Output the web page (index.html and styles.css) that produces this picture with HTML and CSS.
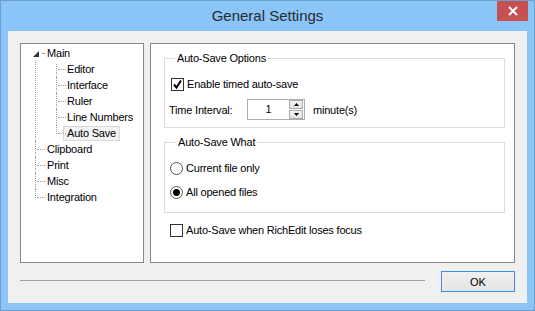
FILE: index.html
```html
<!DOCTYPE html>
<html lang="en">
<head>
<meta charset="UTF-8">
<meta name="viewport" content="width=device-width, initial-scale=1.0">
<title>General Settings</title>
<link rel="stylesheet" href="styles.css">
</head>
<body>
<div class="window">
  <div class="titlebar">
    <div class="title">General Settings</div>
    <button class="close" type="button">
      <svg width="10" height="10" viewBox="0 0 10 10"><path d="M1 1 L9 9 M9 1 L1 9" stroke="#fff" stroke-width="2"/></svg>
    </button>
  </div>

  <div class="client">
    <div class="main">
      <div class="tree-box">
        <ul class="tree">
          <li class="open">
            <div class="row">
              <span class="expander"><svg width="6" height="6" viewBox="0 0 6 6"><polygon points="6,0 6,6 0,6" fill="#333"/></svg></span>
              <span class="label">Main</span>
            </div>
            <ul>
              <li><div class="row"><span class="label">Editor</span></div></li>
              <li><div class="row"><span class="label">Interface</span></div></li>
              <li><div class="row"><span class="label">Ruler</span></div></li>
              <li><div class="row"><span class="label">Line Numbers</span></div></li>
              <li><div class="row"><span class="label selected">Auto Save</span></div></li>
            </ul>
          </li>
          <li><div class="row"><span class="label">Clipboard</span></div></li>
          <li><div class="row"><span class="label">Print</span></div></li>
          <li><div class="row"><span class="label">Misc</span></div></li>
          <li><div class="row"><span class="label">Integration</span></div></li>
        </ul>
      </div>

      <div class="page">
        <fieldset class="group group-options">
          <legend>Auto-Save Options</legend>
          <label class="option">
            <span class="checkbox"><svg width="11" height="11" viewBox="0 0 11 11"><path d="M2 5.5 L4.5 8.5 L9 1.5" fill="none" stroke="#000" stroke-width="2"/></svg></span>
            Enable timed auto-save
          </label>
          <div class="interval">
            <span class="interval-label">Time Interval:</span>
            <div class="spin">
              <span class="spin-value">1</span>
              <div class="spin-buttons">
                <span class="spin-btn"><svg width="5" height="3" viewBox="0 0 5 3"><polygon points="2.5,0 5,3 0,3" fill="#000"/></svg></span>
                <span class="spin-btn"><svg width="5" height="3" viewBox="0 0 5 3"><polygon points="0,0 5,0 2.5,3" fill="#000"/></svg></span>
              </div>
            </div>
            <span class="unit">minute(s)</span>
          </div>
        </fieldset>

        <fieldset class="group group-what">
          <legend>Auto-Save What</legend>
          <label class="option"><span class="radio"></span>Current file only</label>
          <label class="option"><span class="radio on"></span>All opened files</label>
        </fieldset>

        <label class="option focus-opt"><span class="checkbox"></span>Auto-Save when RichEdit loses focus</label>
      </div>
    </div>

    <div class="footer">
      <div class="separator"></div>
      <button class="ok" type="button">OK</button>
    </div>
  </div>
</div>
</body>
</html>
```

FILE: styles.css
```css
* {
  box-sizing: border-box;
}
body {
  margin: 0;
  padding: 0;
  background-color: #8bc4f6;
  font-family: 'Segoe UI', 'Liberation Sans', Arial, sans-serif;
  font-size: 11px;
  letter-spacing: -0.2px;
  color: #000;
}
.window {
  width: 535px;
  height: 311px;
  border: 1px solid #6b9fd0;
  background-color: #8bc4f6;
  display: flex;
  flex-direction: column;
}
.titlebar {
  height: 30px;
  display: grid;
  grid-template-columns: 1fr auto 1fr;
}
.title {
  grid-column: 2;
  font-size: 15px;
  letter-spacing: 0;
  line-height: 30px;
  color: #262b33;
}
.close {
  grid-column: 3;
  justify-self: end;
  align-self: start;
  width: 31px;
  height: 20px;
  margin-right: 6px;
  padding: 0;
  border: none;
  background-color: #c75050;
  display: flex;
  align-items: center;
  justify-content: center;
}
.client {
  flex: 1;
  margin: 0 7px 7px;
  background-color: #f0f0f0;
  padding: 12px 12px 11px;
  display: flex;
  flex-direction: column;
}
.main {
  display: flex;
  gap: 6px;
  height: 220px;
}

/* tree */
.tree-box {
  width: 124px;
  border: 1px solid #828790;
  background-color: #fff;
  padding-top: 1px;
}
.tree,
.tree ul {
  list-style: none;
  margin: 0;
  padding: 0;
}
.tree li {
  position: relative;
  padding-left: 26px;
}
.tree ul {
  margin-left: -5px;
}
.tree ul li {
  padding-left: 25px;
}
.tree li::before {
  content: "";
  position: absolute;
  left: 16px;
  top: 8px;
  width: 8px;
  border-top: 1px dotted #a0a0a0;
}
.tree li::after {
  content: "";
  position: absolute;
  left: 14px;
  top: 0;
  bottom: 0;
  border-left: 1px dotted #a0a0a0;
}
.tree li:last-child::after {
  bottom: auto;
  height: 9px;
}
.tree li.open::before {
  left: 21px;
  width: 2px;
}
.tree li.open::after {
  top: 15px;
}
.tree ul li:first-child::after {
  top: 3px;
}
.tree ul li:last-child::after {
  height: 9px;
}
.row {
  height: 16px;
  display: flex;
  align-items: center;
}
.expander {
  position: absolute;
  left: 12px;
  top: 6px;
  width: 6px;
  height: 6px;
  display: flex;
}
.label {
  line-height: 16px;
  white-space: nowrap;
}
.label.selected {
  line-height: 13px;
  margin-left: -4px;
  padding: 0 3px;
  border: 1px solid #d9d9d9;
  background-color: #f2f2f2;
}

/* settings page */
.page {
  width: 365px;
  border: 1px solid #828790;
  background-color: #fff;
  padding: 7px 9px 0 13px;
}
.group {
  margin: 0;
  padding: 11px 0 7px 4px;
  border: 1px solid #dcdcdc;
  min-width: 0;
}
.group legend {
  margin-left: 6px;
  padding: 0 2px;
  line-height: 14px;
}
.group-what {
  margin-top: 7px;
  padding: 11px 0 12px 5px;
}
.option {
  display: flex;
  align-items: center;
  height: 16px;
  white-space: nowrap;
}
.group-options .option {
  margin-left: 2px;
}
.group-what .option + .option {
  margin-top: 8px;
}
.checkbox {
  width: 13px;
  height: 13px;
  border: 1px solid #333;
  background-color: #fff;
  margin-right: 3px;
  display: flex;
  align-items: center;
  justify-content: center;
}
.radio {
  width: 13px;
  height: 13px;
  border: 1px solid #555;
  border-radius: 50%;
  background-color: #fff;
  margin-right: 3px;
  display: flex;
  align-items: center;
  justify-content: center;
}
.radio.on::after {
  content: "";
  width: 7px;
  height: 7px;
  border-radius: 50%;
  background-color: #000;
}
.focus-opt {
  margin: 9px 0 0 6px;
}
.interval {
  display: flex;
  align-items: center;
  margin-top: 7px;
}
.interval-label {
  width: 78px;
}
.spin {
  width: 58px;
  height: 21px;
  border: 1px solid #abadb3;
  background-color: #fff;
  display: flex;
}
.spin-value {
  flex: 1;
  text-align: center;
  line-height: 19px;
}
.spin-buttons {
  width: 14px;
  margin: 0 1px 0 0;
  display: flex;
  flex-direction: column;
  gap: 1px;
}
.spin-btn {
  flex: 1;
  border: 1px solid #acacac;
  background: linear-gradient(#f2f2f2, #e3e3e3);
  display: flex;
  align-items: center;
  justify-content: center;
}
.unit {
  margin-left: 8px;
}

/* footer */
.footer {
  display: flex;
  margin-top: 8px;
  height: 21px;
}
.separator {
  flex: 1;
  height: 1px;
  margin: 9px 16px 0 0;
  background-color: #a0a0a0;
}
.ok {
  width: 74px;
  height: 21px;
  padding: 0;
  border: 1px solid #3c8fe6;
  background: linear-gradient(#f0f0f0, #e5e5e5);
  font-family: inherit;
  font-size: 11px;
  color: #000;
}
```
